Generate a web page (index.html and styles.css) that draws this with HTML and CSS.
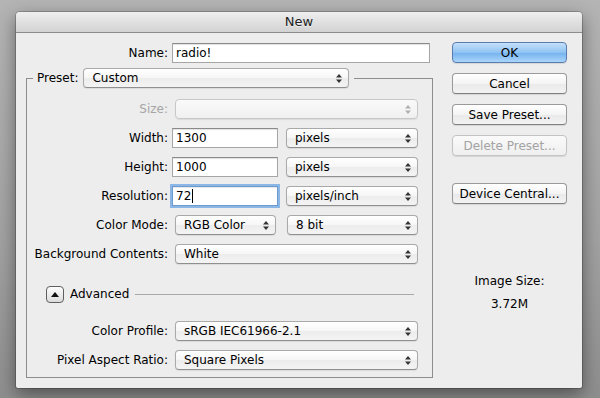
FILE: index.html
```html
<!DOCTYPE html>
<html lang="en">
<head>
    <meta charset="UTF-8">
    <title>New</title>
    <link rel="stylesheet" href="styles.css">
</head>
<body>
    <div class="dialog">
        <div class="titlebar">New</div>
        <div class="content">
            <div class="main">
                <div class="row">
                    <span class="lbl lbl-top">Name:</span>
                    <div class="field field-name">radio!</div>
                </div>

                <fieldset class="group">
                    <legend class="legend">
                        <span class="legend-lbl">Preset:</span>
                        <div class="popup popup-preset">
                            <span>Custom</span>
                            <svg class="arrows" width="6" height="9" viewBox="0 0 6 9"><path d="M3 0L6 3.5H0Z M3 9L6 5.5H0Z"/></svg>
                        </div>
                    </legend>

                    <div class="rows">
                        <div class="row">
                            <span class="lbl disabled">Size:</span>
                            <div class="popup popup-full is-disabled">
                                <span></span>
                                <svg class="arrows" width="6" height="9" viewBox="0 0 6 9"><path d="M3 0L6 3.5H0Z M3 9L6 5.5H0Z"/></svg>
                            </div>
                        </div>

                        <div class="row">
                            <span class="lbl">Width:</span>
                            <div class="field field-num">1300</div>
                            <div class="popup popup-unit">
                                <span>pixels</span>
                                <svg class="arrows" width="6" height="9" viewBox="0 0 6 9"><path d="M3 0L6 3.5H0Z M3 9L6 5.5H0Z"/></svg>
                            </div>
                        </div>

                        <div class="row">
                            <span class="lbl">Height:</span>
                            <div class="field field-num">1000</div>
                            <div class="popup popup-unit">
                                <span>pixels</span>
                                <svg class="arrows" width="6" height="9" viewBox="0 0 6 9"><path d="M3 0L6 3.5H0Z M3 9L6 5.5H0Z"/></svg>
                            </div>
                        </div>

                        <div class="row">
                            <span class="lbl">Resolution:</span>
                            <div class="field field-num is-focused"><span class="caret">72</span></div>
                            <div class="popup popup-unit">
                                <span>pixels/inch</span>
                                <svg class="arrows" width="6" height="9" viewBox="0 0 6 9"><path d="M3 0L6 3.5H0Z M3 9L6 5.5H0Z"/></svg>
                            </div>
                        </div>

                        <div class="row">
                            <span class="lbl">Color Mode:</span>
                            <div class="popup popup-mode">
                                <span>RGB Color</span>
                                <svg class="arrows" width="6" height="9" viewBox="0 0 6 9"><path d="M3 0L6 3.5H0Z M3 9L6 5.5H0Z"/></svg>
                            </div>
                            <div class="popup popup-bits">
                                <span>8 bit</span>
                                <svg class="arrows" width="6" height="9" viewBox="0 0 6 9"><path d="M3 0L6 3.5H0Z M3 9L6 5.5H0Z"/></svg>
                            </div>
                        </div>

                        <div class="row">
                            <span class="lbl">Background Contents:</span>
                            <div class="popup popup-full">
                                <span>White</span>
                                <svg class="arrows" width="6" height="9" viewBox="0 0 6 9"><path d="M3 0L6 3.5H0Z M3 9L6 5.5H0Z"/></svg>
                            </div>
                        </div>
                    </div>

                    <div class="advanced">
                        <div class="disclosure">
                            <svg width="8" height="5" viewBox="0 0 8 5"><path d="M4 0L8 5H0Z"/></svg>
                        </div>
                        <span>Advanced</span>
                        <div class="rule"></div>
                    </div>

                    <div class="rows rows-adv">
                        <div class="row">
                            <span class="lbl">Color Profile:</span>
                            <div class="popup popup-full">
                                <span>sRGB IEC61966-2.1</span>
                                <svg class="arrows" width="6" height="9" viewBox="0 0 6 9"><path d="M3 0L6 3.5H0Z M3 9L6 5.5H0Z"/></svg>
                            </div>
                        </div>
                        <div class="row">
                            <span class="lbl">Pixel Aspect Ratio:</span>
                            <div class="popup popup-full">
                                <span>Square Pixels</span>
                                <svg class="arrows" width="6" height="9" viewBox="0 0 6 9"><path d="M3 0L6 3.5H0Z M3 9L6 5.5H0Z"/></svg>
                            </div>
                        </div>
                    </div>
                </fieldset>
            </div>

            <div class="side">
                <button class="btn btn-default">OK</button>
                <button class="btn">Cancel</button>
                <button class="btn">Save Preset...</button>
                <button class="btn" disabled>Delete Preset...</button>
                <button class="btn btn-device">Device Central...</button>

                <div class="size-info">
                    <p>Image Size:</p>
                    <p>3.72M</p>
                </div>
            </div>
        </div>
    </div>
</body>
</html>
```

FILE: styles.css
```css
html, body {
    margin: 0;
    height: 100%;
}
body {
    font-family: 'DejaVu Sans', 'Liberation Sans', sans-serif;
    font-size: 12px;
    color: #000;
    background: linear-gradient(#b4b4b4, #a2a2a2 60%, #8e8e8e);
    padding: 12px 18px 0 16px;
    box-sizing: border-box;
    overflow: hidden;
}
.dialog {
    width: 566px;
    height: 376px;
    background-color: #ededed;
    border-radius: 4px 4px 2px 2px;
    box-shadow: 0 6px 18px rgba(0, 0, 0, 0.45), 0 0 0 1px rgba(0, 0, 0, 0.2);
    overflow: hidden;
}
.titlebar {
    height: 20px;
    line-height: 20px;
    text-align: center;
    font-size: 13px;
    color: #222;
    background: linear-gradient(#efefef, #d2d2d2);
    border-bottom: 1px solid #8c8c8c;
    text-shadow: 0 1px 0 rgba(255, 255, 255, 0.6);
}
.content {
    display: flex;
}
.main {
    width: 426px;
    padding-left: 10px;
}
.row {
    display: flex;
    align-items: center;
    height: 20px;
}
.main > .row {
    margin-top: 10px;
}
.lbl {
    width: 141px;
    text-align: right;
    flex-shrink: 0;
}
.lbl-top {
    width: 142px;
}
.lbl.disabled {
    color: #a5a5a5;
}

/* text fields */
.field {
    height: 20px;
    line-height: 19px;
    box-sizing: border-box;
    background-color: #fff;
    border: 1px solid #a6a6a6;
    border-top-color: #8a8a8a;
    box-shadow: inset 0 1px 1px rgba(0, 0, 0, 0.12);
    padding-left: 3px;
    margin-left: 4px;
}
.field-name {
    width: 258px;
}
.field-num {
    width: 106px;
}
.field.is-focused {
    border-color: #6c9bd2;
    box-shadow: 0 0 0 2px #8cb6e6, inset 0 1px 1px rgba(0, 0, 0, 0.1);
}
.caret {
    border-right: 1px solid #000;
    padding-right: 1px;
}

/* popup buttons */
.popup {
    height: 20px;
    box-sizing: border-box;
    display: flex;
    align-items: center;
    justify-content: space-between;
    padding: 0 6px 0 8px;
    border: 1px solid #a9a9a9;
    border-bottom-color: #8f8f8f;
    border-radius: 4px;
    background: linear-gradient(#ffffff, #f6f6f6 50%, #ececec 51%, #f4f4f4);
    box-shadow: 0 1px 1px rgba(0, 0, 0, 0.08);
    margin-left: 7px;
}
.arrows {
    fill: #333;
}
.popup.is-disabled {
    border-color: #c8c8c8;
    background: linear-gradient(#fafafa, #f0f0f0);
}
.popup.is-disabled .arrows {
    fill: #b0b0b0;
}
.popup-full {
    width: 243px;
}
.popup-unit {
    width: 132px;
    margin-left: 8px;
}
.popup-mode {
    width: 101px;
}
.popup-bits {
    width: 131px;
    margin-left: 11px;
}
.popup-preset {
    width: 266px;
    margin-left: 5px;
}

/* preset group */
.group {
    margin: 5px 0 0;
    padding: 0 0 7px;
    width: 407px;
    box-sizing: border-box;
    border: 1px solid #8d8d8d;
    min-width: 0;
}
.legend {
    display: flex;
    align-items: center;
    margin-left: 6px;
    padding: 0 5px 0 4px;
}
.rows {
    display: flex;
    flex-direction: column;
    gap: 9px;
    padding-top: 11px;
}
.rows-adv {
    padding-top: 18px;
}
.advanced {
    display: flex;
    align-items: center;
    margin-top: 21px;
    padding-left: 19px;
    height: 18px;
}
.disclosure {
    width: 18px;
    height: 17px;
    box-sizing: border-box;
    border: 1px solid #5f5f5f;
    border-radius: 4px;
    background: linear-gradient(#fdfdfd, #dcdcdc);
    display: flex;
    align-items: center;
    justify-content: center;
    margin-right: 6px;
}
.disclosure svg {
    fill: #111;
}
.rule {
    flex: 1;
    height: 1px;
    background-color: #a8a8a8;
    margin: 0 18px 0 6px;
}

/* side buttons */
.side {
    width: 115px;
    padding-top: 9px;
    display: flex;
    flex-direction: column;
}
.btn {
    font-family: inherit;
    font-size: 12px;
    color: #000;
    height: 21px;
    padding: 0;
    margin-bottom: 10px;
    border: 1px solid #9a9a9a;
    border-bottom-color: #808080;
    border-radius: 4px;
    background: linear-gradient(#ffffff, #f4f4f4 50%, #e9e9e9 51%, #f3f3f3);
    box-shadow: 0 1px 1px rgba(0, 0, 0, 0.1);
}
.btn-default {
    border-color: #5a7db0;
    background: linear-gradient(#c4e0fa, #8fc3f3 50%, #74b2ef 51%, #aad5fa);
}
.btn:disabled {
    color: #a3a3a3;
    border-color: #c3c3c3;
    background: linear-gradient(#fafafa, #efefef);
}
.btn-device {
    margin-top: 17px;
}
.size-info {
    margin-top: 60px;
    text-align: center;
}
.size-info p {
    margin: 0 0 8px;
    line-height: 15px;
}
```
